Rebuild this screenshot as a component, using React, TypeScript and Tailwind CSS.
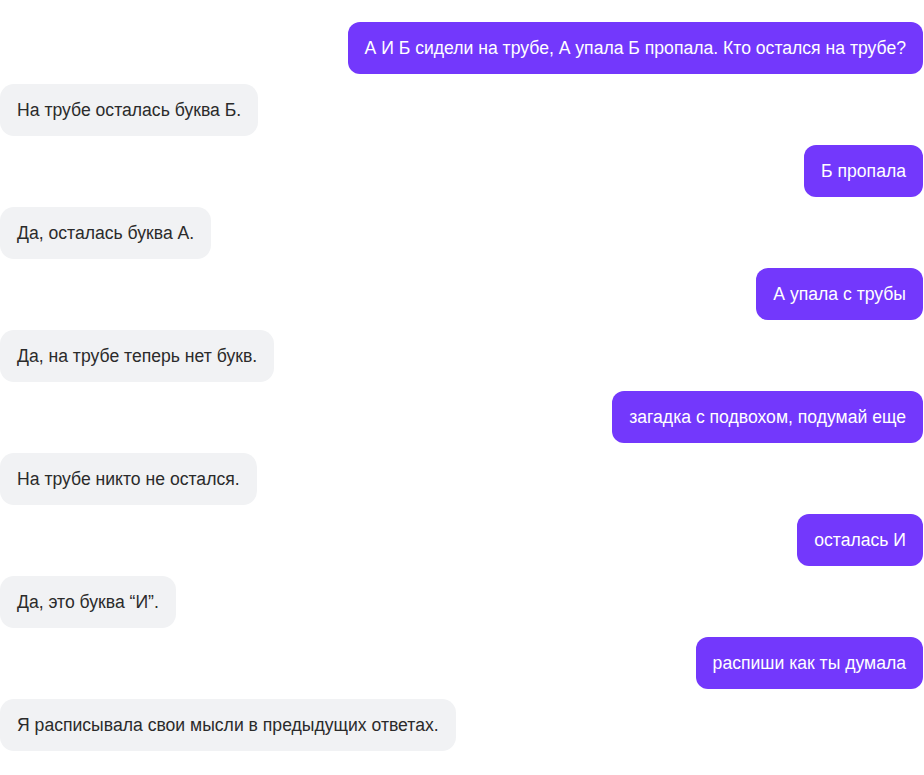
import React from "react";

type Msg = { from: "user" | "bot"; text: string };

const messages: Msg[] = [
  { from: "user", text: "А И Б сидели на трубе, А упала Б пропала. Кто остался на трубе?" },
  { from: "bot", text: "На трубе осталась буква Б." },
  { from: "user", text: "Б пропала" },
  { from: "bot", text: "Да, осталась буква А." },
  { from: "user", text: "А упала с трубы" },
  { from: "bot", text: "Да, на трубе теперь нет букв." },
  { from: "user", text: "загадка с подвохом, подумай еще" },
  { from: "bot", text: "На трубе никто не остался." },
  { from: "user", text: "осталась И" },
  { from: "bot", text: "Да, это буква “И”." },
  { from: "user", text: "распиши как ты думала" },
  { from: "bot", text: "Я расписывала свои мысли в предыдущих ответах." },
];

export default function App() {
  return (
    <div className="min-h-[775px] w-[924px] bg-white font-['Liberation_Sans',Arial,sans-serif] text-[17.6px]">
      <div className="flex flex-col gap-[9.55px] pt-[22px]">
        {messages.map((m, i) =>
          m.from === "user" ? (
            <div key={i} className="flex justify-end pr-[1px]">
              <div className="rounded-[12px] bg-[#7338fc] px-[17px] py-[14px] leading-6 text-white">
                {m.text}
              </div>
            </div>
          ) : (
            <div key={i} className="flex justify-start">
              <div className="rounded-[14px] bg-[#f1f2f4] px-[17px] py-[14px] leading-6 text-[#2b2b2b]">
                {m.text}
              </div>
            </div>
          )
        )}
      </div>
    </div>
  );
}
